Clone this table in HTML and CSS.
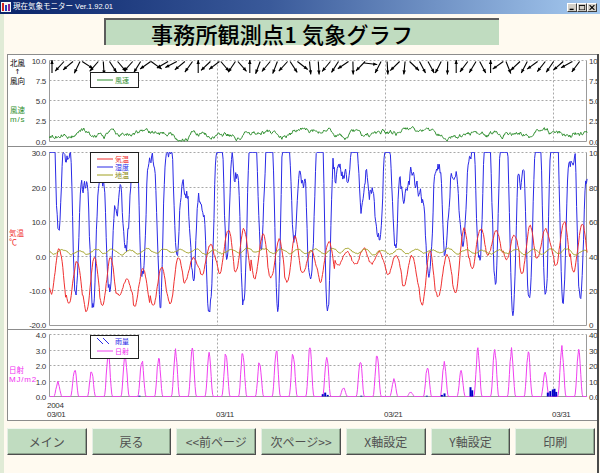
FILE: index.html
```html
<!DOCTYPE html>
<html lang="ja">
<head>
<meta charset="utf-8">
<title>現在気象モニター</title>
<link rel="stylesheet" href="styles.css">
</head>
<body>
<div class="titlebar">
  <svg class="appicon" width="10" height="10" viewBox="0 0 10 10">
    <rect x="0" y="0" width="10" height="10" fill="#f4f4f4"/>
    <rect x="1" y="1" width="2" height="8" fill="#d02020"/>
    <rect x="4" y="3" width="2" height="6" fill="#2040c0"/>
    <rect x="7" y="2" width="2" height="7" fill="#902090"/>
  </svg>
  <span class="wtitle">現在気象モニター Ver.1.92.01</span>
  <div class="winbtns">
    <span class="wb">
      <svg width="8" height="7" viewBox="0 0 8 7"><rect x="1" y="5" width="5" height="2" fill="#000"/></svg>
    </span>
    <span class="wb">
      <svg width="8" height="7" viewBox="0 0 8 7"><rect x="0.5" y="0.5" width="7" height="6" fill="none" stroke="#000"/><rect x="0.5" y="0.5" width="7" height="1" fill="#000"/></svg>
    </span>
    <span class="wb">
      <svg width="8" height="7" viewBox="0 0 8 7"><path d="M1 0.5 L7 6.5 M7 0.5 L1 6.5" stroke="#000" stroke-width="1.4"/></svg>
    </span>
  </div>
</div>

<div class="header">
  <div class="headbox">事務所観測点1 気象グラフ</div>
</div>

<div class="lower">
  <div class="chart">
    <svg id="chart" viewBox="8 51 589 365" width="589" height="365">
      <g class="sep">
        <line x1="8" y1="142.5" x2="597" y2="142.5"/>
        <line x1="8" y1="325.5" x2="597" y2="325.5"/>
      </g>
      <g class="grid">
        <line x1="49.5" y1="56.5" x2="586.5" y2="56.5"/>
        <line x1="49.5" y1="76.5" x2="586.5" y2="76.5"/>
        <line x1="49.5" y1="96.5" x2="586.5" y2="96.5"/>
        <line x1="49.5" y1="116.5" x2="586.5" y2="116.5"/>
        <line x1="217.5" y1="56.5" x2="217.5" y2="137.5"/>
        <line x1="385.5" y1="56.5" x2="385.5" y2="137.5"/>
        <line x1="553.5" y1="56.5" x2="553.5" y2="137.5"/>

        <line x1="49.5" y1="148.5" x2="586.5" y2="148.5"/>
        <line x1="49.5" y1="183.5" x2="586.5" y2="183.5"/>
        <line x1="49.5" y1="217.5" x2="586.5" y2="217.5"/>
        <line x1="49.5" y1="252.5" x2="586.5" y2="252.5"/>
        <line x1="49.5" y1="286.5" x2="586.5" y2="286.5"/>
        <line x1="217.5" y1="148.5" x2="217.5" y2="321.5"/>
        <line x1="385.5" y1="148.5" x2="385.5" y2="321.5"/>
        <line x1="553.5" y1="148.5" x2="553.5" y2="321.5"/>

        <line x1="49.5" y1="330.5" x2="586.5" y2="330.5"/>
        <line x1="49.5" y1="346.5" x2="586.5" y2="346.5"/>
        <line x1="49.5" y1="361.5" x2="586.5" y2="361.5"/>
        <line x1="49.5" y1="377.5" x2="586.5" y2="377.5"/>
        <line x1="217.5" y1="330.5" x2="217.5" y2="392.5"/>
        <line x1="385.5" y1="330.5" x2="385.5" y2="392.5"/>
        <line x1="553.5" y1="330.5" x2="553.5" y2="392.5"/>
      </g>
      <g class="frame">
        <path d="M49.5 56.5 V137.5 H586.5 V56.5"/>
        <path d="M49.5 148.5 V321.5 H586.5 V148.5"/>
        <path d="M49.5 330.5 V392.5 H586.5 V330.5"/>
      </g>

      <g id="data"></g>

      <g class="legend">
        <rect x="90.5" y="68.5" width="48" height="15"/>
        <line class="c-wind" x1="97" y1="76" x2="113" y2="76"/>
        <text class="jp t-wind" x="115" y="79">風速</text>

        <rect x="90.5" y="148.5" width="48" height="30"/>
        <line class="c-temp" x1="97" y1="155" x2="113" y2="155"/>
        <text class="jp t-temp" x="115" y="158">気温</text>
        <line class="c-hum" x1="97" y1="163" x2="113" y2="163"/>
        <text class="jp t-hum" x="115" y="166">湿度</text>
        <line class="c-soil" x1="97" y1="171" x2="113" y2="171"/>
        <text class="jp t-soil" x="115" y="174">地温</text>

        <rect x="90.5" y="331.5" width="48" height="23"/>
        <path class="c-rainsym" d="M97 334 L103 340 M103 334 L109 340"/>
        <text class="jp t-hum" x="115" y="340">雨量</text>
        <line class="c-sol" x1="97" y1="347" x2="113" y2="347"/>
        <text class="jp t-sol" x="115" y="350">日射</text>
      </g>

      <g class="ax axl">
        <text x="46" y="59.5">10.0</text>
        <text x="46" y="79.5">7.5</text>
        <text x="46" y="99.5">5.0</text>
        <text x="46" y="119.5">2.5</text>
        <text x="46" y="140.5">0.0</text>

        <text x="46" y="151.5">30.0</text>
        <text x="46" y="186.5">20.0</text>
        <text x="46" y="220.5">10.0</text>
        <text x="46" y="255.5">0.0</text>
        <text x="46" y="289.5">-10.0</text>
        <text x="46" y="324">-20.0</text>

        <text x="46" y="333.5">4.0</text>
        <text x="46" y="349.5">3.0</text>
        <text x="46" y="364.5">2.0</text>
        <text x="46" y="380.5">1.0</text>
        <text x="46" y="395.5">0.0</text>
      </g>
      <g class="ax axr">
        <text x="589" y="59.5">10.0</text>
        <text x="589" y="79.5">7.5</text>
        <text x="589" y="99.5">5.0</text>
        <text x="589" y="119.5">2.5</text>
        <text x="589" y="140.5">0.0</text>

        <text x="589" y="151.5">100</text>
        <text x="589" y="186.5">80</text>
        <text x="589" y="220.5">60</text>
        <text x="589" y="255.5">40</text>
        <text x="589" y="289.5">20</text>
        <text x="589" y="324">0</text>

        <text x="589" y="333.5">40.0</text>
        <text x="589" y="349.5">30.0</text>
        <text x="589" y="364.5">20.0</text>
        <text x="589" y="380.5">10.0</text>
        <text x="589" y="395.5">0.0</text>
      </g>
      <g class="ax">
        <text x="47" y="403.5">2004</text>
        <text x="47" y="412.5">03/01</text>
        <text x="216" y="412.5">03/11</text>
        <text x="384" y="412.5">03/21</text>
        <text x="552" y="412.5">03/31</text>
      </g>

      <g class="titles">
        <text class="jp" x="10" y="62">北風</text>
        <text class="arr" x="14.5" y="70">↑</text>
        <text class="jp" x="10" y="80">風向</text>
        <text class="jp t-wind" x="10" y="109">風速</text>
        <text class="unit t-wind" x="10" y="118">m/s</text>
        <text class="jp t-temp" x="9" y="232">気温</text>
        <text class="unit t-temp" x="9" y="241">℃</text>
        <text class="jp t-sol" x="9" y="369">日射</text>
        <text class="unit t-sol" x="9" y="378">MJ/m2</text>
      </g>
    </svg>
  </div>

  <div class="buttons">
    <div class="btn">メイン</div>
    <div class="btn">戻る</div>
    <div class="btn">&lt;&lt;前ページ</div>
    <div class="btn">次ページ&gt;&gt;</div>
    <div class="btn">X軸設定</div>
    <div class="btn">Y軸設定</div>
    <div class="btn">印刷</div>
  </div>
</div>
<script src="script.js"></script>
</body>
</html>
```

FILE: styles.css
```css
html, body {
  margin: 0;
  padding: 0;
}
body {
  width: 600px;
  height: 473px;
  overflow: hidden;
  background: linear-gradient(to right, #e0ebd6 0, #e0ebd6 4px, #fffaf0 4px);
  font-family: "Noto Sans CJK JP", "Liberation Sans", sans-serif;
}

/* window title bar */
.titlebar {
  height: 14px;
  display: flex;
  align-items: center;
  background: linear-gradient(to right, #0a246a 0%, #3a5a9a 45%, #a6caf0 100%);
  color: #fff;
}
.appicon {
  margin-left: 1px;
  flex: none;
}
.wtitle {
  margin-left: 2px;
  font-size: 7.5px;
  line-height: 14px;
  white-space: nowrap;
  font-family: "Liberation Sans", "Noto Sans CJK JP", sans-serif;
}
.winbtns {
  margin-left: auto;
  margin-right: 3px;
  display: flex;
}
.wb {
  width: 10px;
  height: 9px;
  box-sizing: border-box;
  background: #d4d0c8;
  border: 1px solid;
  border-color: #fff #404040 #404040 #fff;
  display: flex;
  align-items: center;
  justify-content: center;
}
.wb svg {
  display: block;
  transform: scale(0.8);
}

/* header */
.header {
  height: 36px;
}
.headbox {
  margin: 4px 0 0 104px;
  width: 395px;
  height: 27px;
  box-sizing: border-box;
  padding-left: 45px;
  background: #c0dcc0;
  border-top: 2px solid #5c5c5c;
  border-left: 2px solid #5c5c5c;
  display: flex;
  align-items: center;
  justify-content: flex-start;
  font-size: 22px;
  font-weight: 500;
  color: #000;
  letter-spacing: 0.2px;
  white-space: nowrap;
}

/* lower area */
.lower {
  width: 597px;
  height: 423px;
  border-right: 2px solid #4a4a4a;
}
.chart {
  margin-left: 7px;
  width: 590px;
  height: 367px;
  box-sizing: border-box;
  border: 1px solid #8c8c8c;
  border-right: none;
  background: #fff;
  overflow: hidden;
}
.chart svg {
  display: block;
}

.sep line {
  stroke: #8c8c8c;
  stroke-width: 1;
}
.grid line {
  stroke: #a8a8a8;
  stroke-width: 1;
  stroke-dasharray: 2 2;
}
.frame path {
  fill: none;
  stroke: #9a9a9a;
  stroke-width: 1;
}

.s-wind { fill: none; stroke: #2f8f2f; stroke-width: 1; }
.s-temp { fill: none; stroke: #f03030; stroke-width: 1; }
.s-hum  { fill: none; stroke: #2a2ae6; stroke-width: 1; }
.s-soil { fill: none; stroke: #a0a020; stroke-width: 1; }
.s-sol  { fill: none; stroke: #f040f0; stroke-width: 1; }
.s-rain { fill: #0000c8; }
.arrows line { stroke: #000; stroke-width: 1.1; }
.arrows polygon { fill: #000; }

.legend rect {
  fill: #fff;
  stroke: #202020;
  stroke-width: 1;
}
.c-wind { stroke: #2f8f2f; }
.c-temp { stroke: #f03030; }
.c-hum  { stroke: #2a2ae6; }
.c-soil { stroke: #a0a020; }
.c-sol  { stroke: #f040f0; }
.c-rainsym { stroke: #2a2ae6; fill: none; }

.jp {
  font-family: "Noto Sans CJK JP", sans-serif;
  font-size: 7.5px;
  fill: #000;
}
.legend .jp {
  font-size: 7px;
}
.t-wind { fill: #2f8f2f; }
.t-temp { fill: #f03030; }
.t-hum  { fill: #2a2ae6; }
.t-soil { fill: #8a8a10; }
.t-sol  { fill: #f030f0; }

.ax text {
  font-family: "Liberation Sans", sans-serif;
  font-size: 8px;
  fill: #333;
  letter-spacing: -0.3px;
}
.axl text {
  text-anchor: end;
}
.axr text {
  text-anchor: start;
}
.arr {
  font-family: "DejaVu Sans", sans-serif;
  font-size: 7px;
  fill: #000;
}
.unit {
  font-family: "Liberation Sans", "Noto Sans CJK JP", sans-serif;
  font-size: 8px;
  letter-spacing: 0.8px;
}

/* buttons */
.buttons {
  display: flex;
  gap: 5px;
  margin: 7px 2px 0 7px;
  height: 27px;
}
.btn {
  flex: 1;
  box-sizing: border-box;
  background: #c0dcc0;
  border: 1px solid;
  border-color: #eef6ee #4e4e4e #4e4e4e #e4eee4;
  box-shadow: inset -1px -1px 0 #8ea48e;
  display: flex;
  align-items: center;
  justify-content: center;
  font-size: 12px;
  color: #505050;
  white-space: nowrap;
}
```

FILE: script.js
```js
(function () {
  var NS = 'http://www.w3.org/2000/svg';
  var seed = 20040301;
  function r() { seed = (seed * 16807) % 2147483647; return seed / 2147483647; }
  var X0 = 49.5, DX = 16.8, N = 768;
  function X(h) { return X0 + h * DX / 24; }
  function P(pts) {
    var d = '';
    for (var i = 0; i < pts.length; i++) d += (i ? 'L' : 'M') + pts[i][0].toFixed(1) + ' ' + pts[i][1].toFixed(1);
    return d;
  }
  function el(tag, attrs, parent) {
    var e = document.createElementNS(NS, tag);
    for (var k in attrs) e.setAttribute(k, attrs[k]);
    parent.appendChild(e);
    return e;
  }
  var g = document.getElementById('data');

  /* wind speed */
  var pts = [], v = 0.2;
  for (var h = 0; h <= N; h += 1) {
    v += (r() - 0.5) * 0.5 + (0.9 - v) * 0.08;
    if (v < 0.05) v = 0.05; if (v > 2.0) v = 2.0;
    pts.push([X(h), 137.5 - v * 8.1]);
  }
  el('path', { d: P(pts), 'class': 's-wind' }, g);

  /* wind direction arrows */
  var aseed = 977;
  function ra() { aseed = (aseed * 48271) % 2147483647; return aseed / 2147483647; }
  var ag = el('g', { 'class': 'arrows' }, g);
  for (var i = 0; i < 62; i++) {
    var x = 52 + i * 8.6;
    var q = ra(), a;
    if (q < 0.06) a = Math.PI;
    else if (q < 0.48) a = -(0.35 + ra() * 0.75);
    else if (q < 0.58) a = (ra() - 0.5) * 0.2;
    else if (q < 0.68) a = (ra() < 0.5 ? -1 : 1) * (1.3 + ra() * 0.25);
    else a = 0.35 + ra() * 0.75;
    var dx = Math.sin(a), dy = Math.cos(a), L = 13;
    var x1, y1;
    if (dy >= 0) { x1 = x - dx * 5; y1 = 57.5; } else { x1 = x; y1 = 69; }
    if (Math.abs(dy) < 0.3) { y1 = 59; x1 = x - dx * 6; }
    var x2 = x1 + dx * L, y2 = y1 + dy * L;
    el('line', { x1: x1.toFixed(1), y1: y1.toFixed(1), x2: x2.toFixed(1), y2: y2.toFixed(1) }, ag);
    var bx = x2 - dx * 4, by = y2 - dy * 4, px = -dy * 1.7, py = dx * 1.7;
    el('polygon', {
      points: x2.toFixed(1) + ',' + y2.toFixed(1) + ' ' + (bx + px).toFixed(1) + ',' + (by + py).toFixed(1) + ' ' + (bx - px).toFixed(1) + ',' + (by - py).toFixed(1)
    }, ag);
  }

  /* temperature / humidity / soil */
  var tb = [-3, -7, -8, -7, -8, -9, -9, -8, -5, -2, 2, 3, 1, 0, -1, -2, -1, -1, 0, 0, -1, -3, -6, -7, -4, 2, 4, 3, 2, 3, 4, 3, 3];
  var amp = [], hmin = [], hmax = [], tph = [];
  for (var d = 0; d < 33; d++) {
    amp.push(3 + r() * 5);
    hmin.push(6 + r() * 45);
    hmax.push(r() < 0.3 ? 112 : 72 + r() * 33);
    tph.push((r() - 0.5) * 4);
  }
  amp[17] = 1.5; amp[18] = 2; amp[19] = 2;
  hmin[0] = 55; hmax[0] = 120; hmin[17] = 85; hmin[18] = 70; hmin[21] = 88; hmin[22] = 30;
  hmax[12] = 112; hmax[13] = 112; hmax[29] = 112; hmax[30] = 112;
  var tp = [], hp = [], sp = [];
  var n1 = 0, n2 = 0, n3 = 0;
  for (h = 0; h <= N; h++) {
    var dd = Math.min(31, Math.floor(h / 24)), hd = h % 24, f = hd / 24;
    var pp = hd - 9 - tph[dd];
    var ph = Math.sin(2 * Math.PI * pp / 24);
    n1 += (r() - 0.5) * 1.0; n1 *= 0.9;
    var base = tb[dd] + (tb[dd + 1] - tb[dd]) * f;
    var t = base + amp[dd] * ph + n1;
    tp.push([X(h), 148.5 + (30 - t) * 3.46]);

    var bell = 0;
    var hs = hd - 6 - tph[dd] * 0.5;
    if (hs > 0 && hs < 15) bell = Math.pow(Math.sin(Math.PI * hs / 15), 1.3);
    n2 += (r() - 0.5) * 12; n2 *= 0.75;
    var top = hmax[dd] + (hmax[dd + 1] - hmax[dd]) * Math.max(0, (hd - 18) / 6);
    var hu = top - (top - hmin[dd]) * bell + n2;
    if (hu > 100) hu = 100; if (hu < 4) hu = 4;
    hp.push([X(h), 321.5 - hu * 1.73]);

    n3 += (r() - 0.5) * 0.35; n3 *= 0.9;
    var st = 1.4 + 0.6 * Math.sin(2 * Math.PI * (hd - 13) / 24) + n3;
    sp.push([X(h), 148.5 + (30 - st) * 3.46]);
  }
  el('path', { d: P(hp), 'class': 's-hum' }, g);
  el('path', { d: P(tp), 'class': 's-temp' }, g);
  el('path', { d: P(sp), 'class': 's-soil' }, g);

  /* solar radiation */
  var peaks = [1.0, 1.9, 1.8, 3.0, 3.0, 2.5, 2.7, 3.1, 3.2, 2.9, 3.0, 3.1, 2.4, 3.2, 3.0, 3.3, 2.8, 0.6, 2.5, 2.9, 1.2, 0.3, 2.1, 2.3, 1.7, 3.3, 3.3, 3.2, 3.1, 1.6, 3.4, 3.2];
  var sol = [];
  for (h = 0; h <= N; h++) {
    var dy2 = Math.min(31, Math.floor(h / 24)), hr = h % 24, val = 0;
    if (hr > 6 && hr < 18) {
      var s2 = Math.sin(Math.PI * (hr - 6) / 12);
      val = peaks[dy2] * Math.pow(s2, 2.2) * (0.85 + 0.15 * r());
    }
    sol.push([X(h), 392.5 - val * 15.5]);
  }
  el('path', { d: P(sol), 'class': 's-sol' }, g);

  /* rain */
  var rain = [[5.3, 0.05], [16.2, 0.15], [16.35, 0.25], [16.5, 0.1], [18.5, 0.05], [22.4, 0.05],
    [23.3, 0.1], [23.45, 0.2], [25.0, 0.6], [25.1, 0.4], [29.6, 0.25], [29.75, 0.35], [29.9, 0.45], [30.0, 0.5], [30.1, 0.3]];
  for (i = 0; i < rain.length; i++) {
    var rx = X(rain[i][0] * 24), rh = rain[i][1] * 15.5;
    el('rect', { x: rx.toFixed(1), y: (392.5 - rh).toFixed(1), width: 2, height: rh.toFixed(1), 'class': 's-rain' }, g);
  }
})();
```
